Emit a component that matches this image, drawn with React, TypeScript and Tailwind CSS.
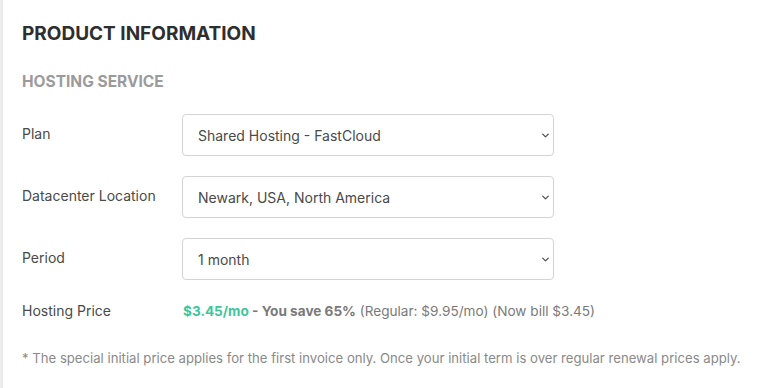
import { ChevronDown } from 'lucide-react'

const FIELDS = [
  { label: 'Plan', value: 'Shared Hosting - FastCloud' },
  { label: 'Datacenter Location', value: 'Newark, USA, North America' },
  { label: 'Period', value: '1 month' },
]

function SelectBox({ value }: { value: string }) {
  return (
    <div className="relative w-[372px] h-[42px]">
      <select
        defaultValue={value}
        className="appearance-none w-full h-full rounded border border-[#d4d4d4] bg-white pl-[15px] pr-8 text-[14px] text-[#4a4a4a] outline-none"
      >
        <option>{value}</option>
      </select>
      <ChevronDown className="absolute right-[3px] top-[16px] w-[11px] h-[11px] text-[#555] pointer-events-none" strokeWidth={3} />
    </div>
  )
}

export default function App() {
  return (
    <div
      className="w-[766px] h-[388px] bg-white border-l-[3px] border-[#ececec] pl-[19px] pt-[22px]"
      style={{ fontFamily: 'Inter, "Noto Sans", sans-serif' }}
    >
      <h2 className="text-[19px] leading-[24px] font-bold text-[#2e2e2e]">PRODUCT INFORMATION</h2>
      <h3 className="mt-[26px] text-[15.5px] leading-[20px] font-bold text-[#9b9b9b]">HOSTING SERVICE</h3>

      <div className="mt-[22px] flex flex-col gap-[20px]">
        {FIELDS.map((f) => (
          <div key={f.label} className="flex items-center">
            <div className="w-[160px] -mt-[3px] text-[14px] text-[#4a4a4a]">{f.label}</div>
            <SelectBox value={f.value} />
          </div>
        ))}
      </div>

      <div className="mt-[19px] flex items-center text-[14px]">
        <div className="w-[161px] text-[#4a4a4a]">Hosting Price</div>
        <div className="text-[13.6px] text-[#7a7a7a] mt-[2px]">
          <span className="font-bold text-[#3ec79b]">$3.45/mo</span>
          <span className="font-bold"> - You save 65%</span>
          <span> (Regular: $9.95/mo) (Now bill $3.45)</span>
        </div>
      </div>

      <p className="mt-[28px] text-[13.15px] text-[#8a8a8a]">
        * The special initial price applies for the first invoice only. Once your initial term is over regular renewal prices apply.
      </p>
    </div>
  )
}
